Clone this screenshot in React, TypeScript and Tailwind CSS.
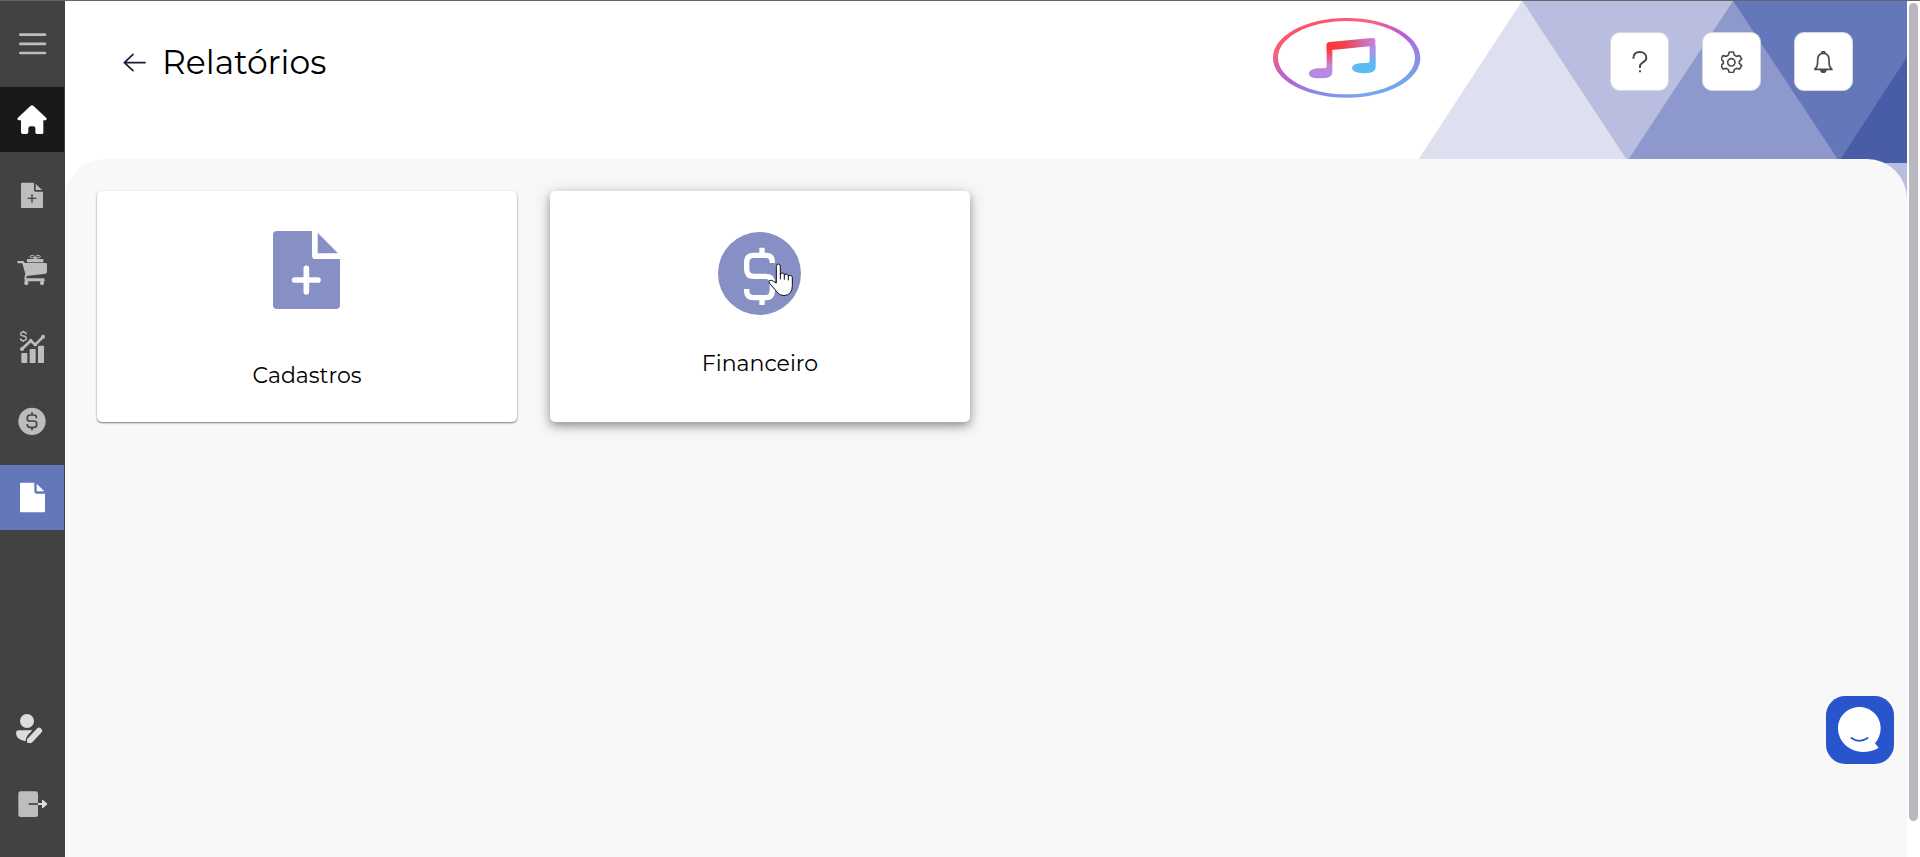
import type { ReactNode } from "react";

const Glyph = ({ children, tall = false }: { children: ReactNode; tall?: boolean }) => (
  <svg
    viewBox={tall ? "0 0 192 258" : "0 0 192 195"}
    className={tall ? "h-[86px] w-16" : "h-[65px] w-16"}
    fill="currentColor"
    aria-hidden="true"
  >
    {children}
  </svg>
);

const NavItem = ({ label, tone, children }: { label: string; tone: string; children: ReactNode }) => (
  <a href="#" aria-label={label} className={`block w-16 ${tone}`}>
    <Glyph>{children}</Glyph>
  </a>
);

const Sidebar = () => (
  <aside className="flex w-[65px] shrink-0 flex-col bg-[#424242] pb-5 text-[#bdbdbd]">
    <button type="button" aria-label="Menu" className="block w-16">
      <Glyph tall>
        <path d="M61 101H135M61 128.500H135M61 156H135" stroke="currentColor" strokeWidth="8" strokeLinecap="round" />
      </Glyph>
    </button>
    <nav className="flex flex-1 flex-col">
      <NavItem label="Início" tone="bg-[#191919] text-white">
        <path d="M92 56q4-3 8 0l39 37q3 5-2 7h-7v37q0 4-5 4h-14q-5 0-5-5v-12q0-6-6-6h-8q-7 0-7 6v11q0 6-6 6H68q-5 0-5-5v-36h-7q-6-2-3-7z" />
      </NavItem>
      <div className="mt-[9px] flex flex-col gap-[11px]">
        <NavItem label="Cadastros" tone="">
          <path fillRule="evenodd" d="M66 65h36v22q0 5 5 5h22v46q0 3-3 3H66q-3 0-3-3V68q0-3 3-3zM94 99v11H83v4h11v11h4v-11h11v-4H98V99z" />
          <path d="M107 68v19h19z" />
        </NavItem>
        <NavItem label="Vendas" tone="">
          <path d="M52 72h16q4 0 5 4l1 2h63q4 0 4 4v23q0 4-4 5l-57 7-1 7h54v5H77q-5 0-4-5l3-14-9-31H54q-3-2-2-7z" />
          <path d="M81 66h49v10H81z" />
          <ellipse cx="97" cy="59" rx="7" ry="3.500" fill="none" stroke="currentColor" strokeWidth="3" />
          <ellipse cx="114" cy="59" rx="7" ry="3.500" fill="none" stroke="currentColor" strokeWidth="3" />
          <path d="M103 61h6l3 7H99zM74 128h60v5H74z" />
          <circle cx="79" cy="138" r="6.500" />
          <circle cx="126" cy="138" r="6.500" />
        </NavItem>
        <NavItem label="Desempenho" tone="">
          <rect x="64" y="120" width="18" height="30" rx="2" />
          <rect x="89" y="108" width="18" height="42" rx="2" />
          <rect x="114" y="98" width="18" height="52" rx="2" />
          <path d="M66 108L92 83l14 12 24-24" fill="none" stroke="currentColor" strokeWidth="8" strokeLinejoin="round" />
          <circle cx="66" cy="108" r="6" />
          <circle cx="92" cy="82" r="5" />
          <circle cx="106" cy="95" r="5" />
          <circle cx="129" cy="71" r="6" />
          <path d="M79 64q-1-7-9-7t-8 6q0 5 8 6 9 1 9 7 0 7-9 7-8 0-9-7M70 53v4M70 83v4" fill="none" stroke="currentColor" strokeWidth="4" />
        </NavItem>
        <NavItem label="Financeiro" tone="">
          <circle cx="96" cy="97" r="41" />
          <path d="M109 88v-4q0-6-7-6H90q-8 0-8 8v3q0 7 8 7h12q8 0 8 8v3q0 8-8 8H90q-8 0-8-6v-4M96 70v8M96 115v9" fill="none" stroke="#424242" strokeWidth="5" />
        </NavItem>
        <NavItem label="Relatórios" tone="bg-[#6577bb] text-white">
          <path d="M64 53h39v26q0 7 6 7h26v52q0 4-4 4H64q-4 0-4-4V57q0-4 4-4z" />
          <path d="M110 56v23h23z" />
        </NavItem>
      </div>
      <div className="mt-auto flex flex-col gap-[11px]">
        <NavItem label="Minha conta" tone="text-[#dcdcdc]">
          <circle cx="81" cy="75" r="21" />
          <path d="M56 103h41l-14 15q-6 7-6 18-13-1-22-9-7-7-7-15 0-9 8-9z" />
          <path d="M91 132L117 104" stroke="currentColor" strokeWidth="18" strokeLinecap="round" />
          <path d="M81 141l2-15 13 13z" />
        </NavItem>
        <NavItem label="Sair" tone="">
          <rect x="55" y="58" width="59" height="77" rx="7" />
          <path d="M86 96h28" stroke="#424242" strokeWidth="5" />
          <path d="M114 93h12V85q0-3 3-1l11 9q4 3 0 6l-11 9q-3 2-3-1v-8h-12z" fill="#dcdcdc" />
        </NavItem>
      </div>
    </nav>
  </aside>
);

const Logo = () => (
  <svg viewBox="0 0 444 240" className="h-20 w-[148px]" role="img" aria-label="Música">
    <defs>
      <linearGradient id="ring" x1="0.150" y1="0" x2="0.850" y2="1">
        <stop offset="0" stopColor="#ff4d5c" />
        <stop offset="0.250" stopColor="#f9607f" />
        <stop offset="0.480" stopColor="#b55fd6" />
        <stop offset="0.700" stopColor="#8f86e8" />
        <stop offset="1" stopColor="#62baf3" />
      </linearGradient>
      <linearGradient id="stem" gradientUnits="userSpaceOnUse" x1="170" y1="75" x2="170" y2="175">
        <stop offset="0" stopColor="#ff3636" />
        <stop offset="0.300" stopColor="#f2485f" />
        <stop offset="0.700" stopColor="#c783dc" />
        <stop offset="1" stopColor="#b18be6" />
      </linearGradient>
      <linearGradient id="beam" gradientUnits="userSpaceOnUse" x1="165" y1="80" x2="305" y2="70">
        <stop offset="0" stopColor="#ff3636" />
        <stop offset="0.350" stopColor="#f0424f" />
        <stop offset="1" stopColor="#c184e0" />
      </linearGradient>
      <linearGradient id="tail" gradientUnits="userSpaceOnUse" x1="300" y1="75" x2="300" y2="150">
        <stop offset="0" stopColor="#c184e0" />
        <stop offset="0.400" stopColor="#a394ec" />
        <stop offset="0.750" stopColor="#62b6f3" />
        <stop offset="1" stopColor="#5bbcf2" />
      </linearGradient>
    </defs>
    <path
      fill="url(#ring)"
      fillRule="evenodd"
      d="M221 0C343 0 442 53 442 120S343 239 221 239 0 187 0 120 99 0 221 0zM221 9C107 9 15 58 15 119s92 110 206 110 205-49 205-110S335 9 221 9z"
    />
    <path fill="url(#stem)" d="M161 82q0-7 10-7l7 24v64q0 18-31 18h-8c-20 0-31-5-31-14s12-16 31-16h13q9 0 9-7z" />
    <path fill="url(#beam)" d="M161 80q0-7 9-8l125-12q12-1 12 6v19H290L178 96l-17 3z" />
    <path fill="url(#tail)" d="M290 83h18v66q-1 17-37 17-33-1-34-15 0-15 32-16h12q9 0 9-7z" />
  </svg>
);

const Triangles = () => (
  <svg viewBox="0 0 489 200" className="absolute top-0 right-0 h-[200px] w-[489px]" aria-hidden="true">
    <path d="M104 0H489V162H210z" fill="#b9bee1" />
    <path d="M104 0L209 159H0z" fill="#dfe0ef" />
    <path d="M315 0L422 162H208z" fill="#8d98cd" />
    <path d="M315 0H489V162H422z" fill="#6577bb" />
    <path d="M489 56V162H420z" fill="#495ca8" />
    <path d="M400 162h89v38h-89z" fill="#b9bee1" />
  </svg>
);

const HeaderButton = ({ label, children }: { label: string; children: ReactNode }) => (
  <button
    type="button"
    aria-label={label}
    className="flex size-[59px] items-center justify-center rounded-[10px] border border-[#d8d8dc] bg-white text-[#4b4b4b]"
  >
    <svg viewBox="0 0 66 66" className="size-[22px]" fill="none" stroke="currentColor" strokeWidth="5" aria-hidden="true">
      {children}
    </svg>
  </button>
);

const Header = () => (
  <header className="flex h-[158px] items-start pr-[54px] pl-[58px]">
    <div className="flex flex-1 items-center pt-[41px]">
      <a href="#" aria-label="Voltar" className="mr-4">
        <svg viewBox="0 0 69 57" className="h-[19px] w-[23px]" fill="none" stroke="#24123c" strokeWidth="5" strokeLinecap="round" strokeLinejoin="round" aria-hidden="true">
          <path d="M66 29H4M30 4L4 29l26 24" />
        </svg>
      </a>
      <h1 className="text-[33px] leading-10 text-black">Relatórios</h1>
    </div>
    <div className="mt-[17px] mr-[189px]">
      <Logo />
    </div>
    <div className="relative mt-[31px] flex gap-[33px]">
      <HeaderButton label="Ajuda">
        <path d="M13 23C13 9 21 3 32 3s20 7 20 18c0 13-19 13-19 24v6" strokeWidth="6" />
        <path d="M30 58h6v6h-6z" fill="currentColor" stroke="none" />
      </HeaderButton>
      <HeaderButton label="Configurações">
        <path
          strokeLinejoin="round"
          d="M25 3h12l3 9 6 4 10-2 6 10-7 7v6l7 7-6 10-10-2-6 4-3 9H25l-3-9-6-4-10 2-6-10 7-7v-6l-7-7 6-10 10 2 6-4z"
        />
        <circle cx="31" cy="34" r="11" />
      </HeaderButton>
      <HeaderButton label="Notificações">
        <path strokeLinejoin="round" d="M31 7c12 0 17 9 17 20 0 16 1 20 9 28H5c8-8 9-12 9-28C14 16 19 7 31 7z" />
        <path d="M26 6q0-4 5-4t5 4" />
        <path d="M21 56h20q-1 10-10 10t-10-10z" fill="currentColor" stroke="none" />
      </HeaderButton>
    </div>
  </header>
);

const Cursor = () => (
  <svg viewBox="0 0 78 99" className="absolute top-[72px] left-[217px] h-[33px] w-[26px]" aria-hidden="true">
    <path
      d="M28 60V10q0-7 6-7t6 7v26q0-6 6-6t6 5v3q1-5 6-5t6 5v3q1-4 6-4 6 0 6 7v24q0 28-25 30-14 0-22-12L8 61q-5-7 1-9 6-1 10 3z"
      fill="white"
      stroke="#111"
      strokeWidth="3"
      strokeLinejoin="round"
    />
    <path d="M40 34v14M52 36v13M64 39v12" stroke="#111" strokeWidth="3" strokeLinecap="round" />
  </svg>
);

const cardBase = "relative flex h-[231px] w-[420px] flex-col items-center rounded-[5px] bg-white text-black";

const Cards = () => (
  <div className="flex flex-wrap gap-[33px]">
    <a href="#" className={`${cardBase} pt-10 shadow-[0_1px_2px_rgba(0,0,0,0.500),0_0_3px_rgba(0,0,0,0.050)]`}>
      <svg viewBox="0 0 207 234" className="h-[78px] w-[69px]" fill="#8690c5" aria-hidden="true">
        <path d="M12 0h105v74q0 10 10 10h74v138q0 12-12 12H12q-12 0-12-12V12Q0 0 12 0z" />
        <path d="M134 5v62h61z" />
        <path d="M100 112v70M65 147h70" stroke="white" strokeWidth="17" strokeLinecap="round" />
      </svg>
      <span className="mt-[51px] text-[22px] leading-8">Cadastros</span>
    </a>
    <a href="#" className={`${cardBase} pt-[41px] shadow-[0_4px_8px_rgba(0,0,0,0.300),0_3px_18px_rgba(0,0,0,0.180)]`}>
      <svg viewBox="0 0 255 249" className="h-[83px] w-[85px]" aria-hidden="true">
        <circle cx="124.500" cy="124.500" r="124.500" fill="#8690c5" />
        <path
          d="M163 93V90q0-20-20-20h-36q-21 0-21 22v19q0 22 21 22h36q20 0 20 20v22q0 22-20 22h-36q-21 0-21-20v-6M132 47v23M132 197v22"
          fill="none"
          stroke="white"
          strokeWidth="16"
        />
      </svg>
      <span className="mt-[33px] text-[22px] leading-8">Financeiro</span>
      <Cursor />
    </a>
  </div>
);

const ChatButton = () => (
  <button type="button" aria-label="Abrir chat" className="fixed right-[26px] bottom-[93px] size-[68px]">
    <svg viewBox="0 0 204 204" className="size-[68px]" aria-hidden="true">
      <rect width="204" height="204" rx="58" fill="#2854cc" />
      <path d="M100 33c36 0 64 29 64 63 0 18-6 33-17 46l11 13c-14 9-31 13-48 13-42-1-74-33-74-71 0-36 29-64 64-64z" fill="white" />
      <path d="M76 126q24 17 49 0" fill="none" stroke="#2854cc" strokeWidth="5" strokeLinecap="round" />
    </svg>
  </button>
);

export default function App() {
  return (
    <div className="flex h-screen overflow-hidden border-t border-[#666666] bg-white font-['Montserrat','Inter',sans-serif]">
      <Sidebar />
      <div className="relative flex min-w-0 flex-1 flex-col">
        <Triangles />
        <Header />
        <main className="relative flex-1 rounded-t-[40px] bg-[#f8f8f8] p-8">
          <Cards />
        </main>
      </div>
      <div className="flex w-[13px] shrink-0 flex-col bg-white px-[2px] pt-[2px] pb-9" aria-hidden="true">
        <div className="flex-1 rounded-full bg-[#b9b8be]" />
      </div>
      <ChatButton />
    </div>
  );
}
